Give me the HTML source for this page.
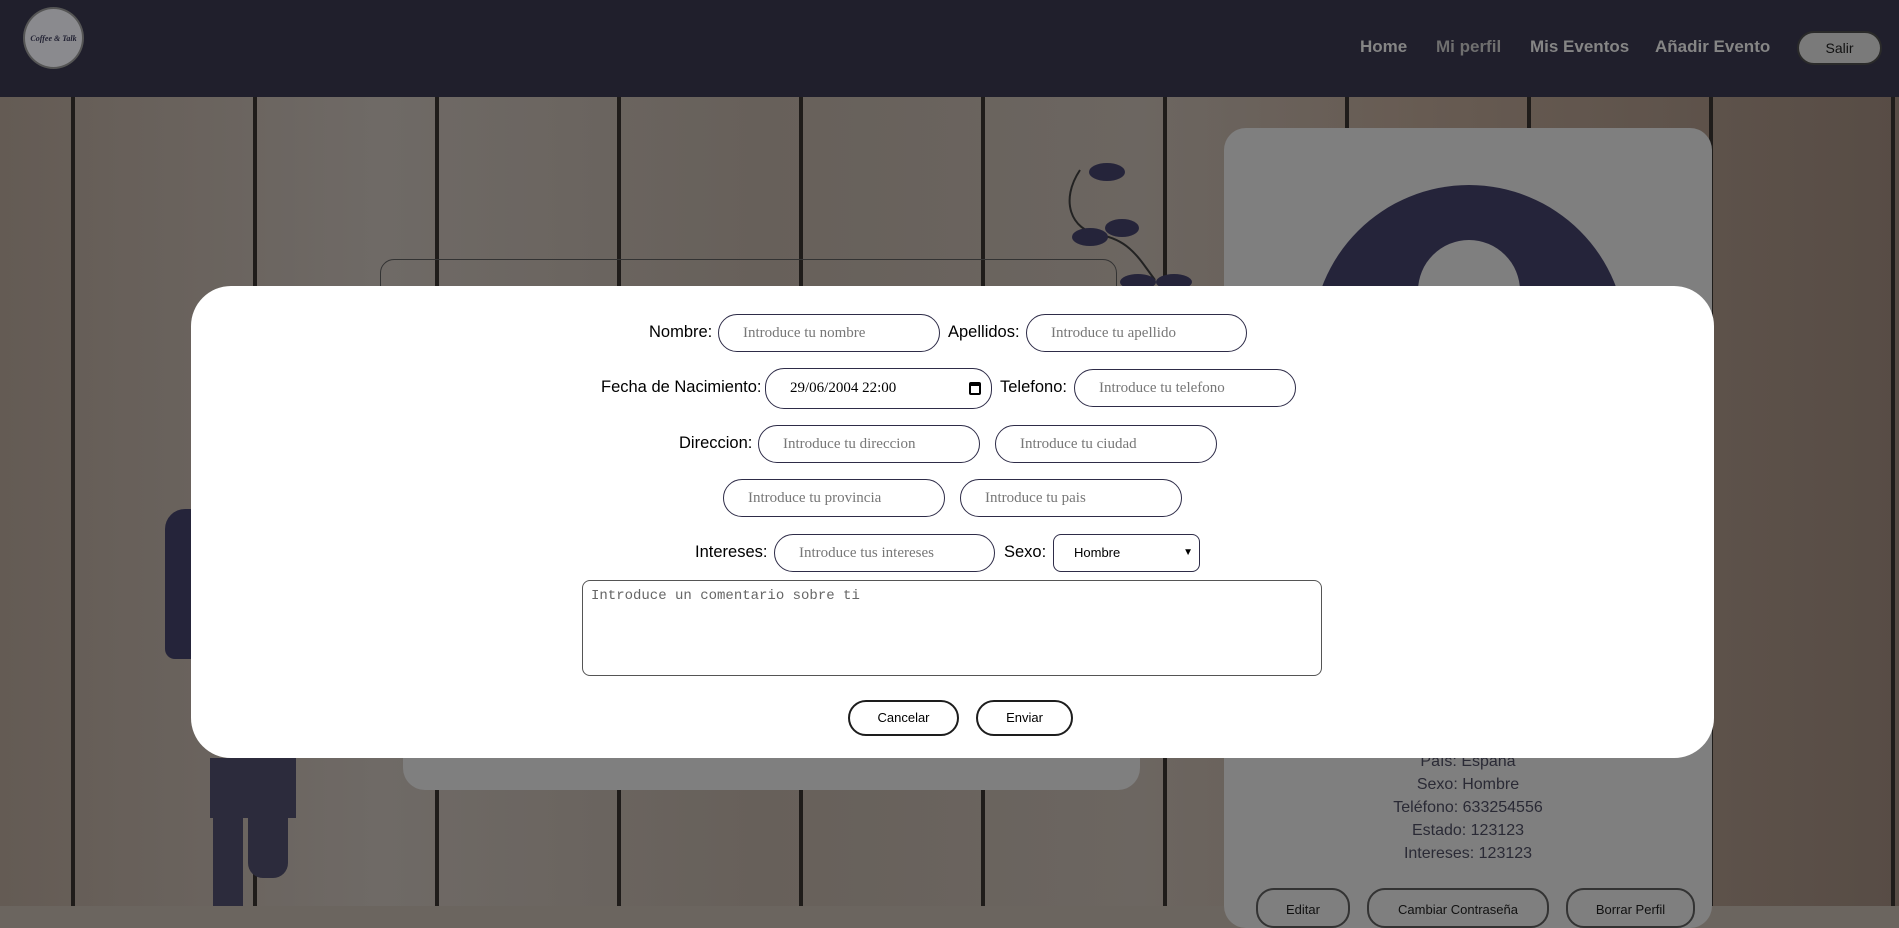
<!DOCTYPE html>
<html><head><meta charset="utf-8"><style>
*{box-sizing:border-box;margin:0;padding:0}
body{width:1899px;height:906px;overflow:hidden;position:relative;font-family:"Liberation Sans",sans-serif;background:#6b655f}
.bg{position:absolute;left:0;top:97px;width:1899px;height:809px;
background:
repeating-linear-gradient(90deg,transparent 0 71px,#1f1c1a 71px 75px,transparent 75px 182px),
linear-gradient(90deg,#645b54,#6f6a66 20%,#67605a 40%,#6c6661 60%,#675b52 75%,#574c45 100%);}
.hdr{position:absolute;left:0;top:0;width:1899px;height:97px;background:#201f2c}
.logo{position:absolute;left:23px;top:7px;width:61px;height:62px;border-radius:50%;background:#8a8a8e;border:2px solid #555;font:italic bold 8px "Liberation Serif",serif;color:#223;display:flex;align-items:center;justify-content:center}
.nav{position:absolute;top:37px;font-weight:bold;font-size:17px;color:#858585}
.salir{position:absolute;left:1797px;top:31px;width:85px;height:34px;border-radius:17px;background:#7a7a7a;border:2px solid #2a2a2a;font-size:14px;color:#111;text-align:center;line-height:30px}
.card{position:absolute;background:#7f7f7f;border-radius:22px}
.modal{position:absolute;left:191px;top:286px;width:1523px;height:472px;background:#fff;border-radius:40px}
.lbl{position:absolute;font-size:16.5px;color:#000}
.in{position:absolute;height:38px;border:1px solid #2e2c48;border-radius:19px;background:#fff;font:15px "Liberation Serif",serif;color:#777;padding-left:24px;line-height:36px}
.info{position:absolute;left:1224px;width:488px;text-align:center;font-size:16px;color:#2a2a35}
.btn{position:absolute;border:2px solid #1d1d1d;border-radius:18px;background:#fff;font-size:13px;text-align:center;color:#000}
.gb{position:absolute;border:2px solid #333;border-radius:18px;font-size:13px;text-align:center;color:#111;height:40px;padding-top:12px}
.dk{position:absolute;background:#25243a}
</style></head><body>
<div class="bg"></div>
<div class="hdr"></div>
<div class="logo">Coffee &amp; Talk</div>
<div class="nav" style="left:1360px">Home</div>
<div class="nav" style="left:1436px;color:#6f6f6f">Mi perfil</div>
<div class="nav" style="left:1530px">Mis Eventos</div>
<div class="nav" style="left:1655px">Añadir Evento</div>
<div class="salir">Salir</div>

<div style="position:absolute;left:380px;top:259px;width:737px;height:60px;border:1px solid #333;border-radius:14px"></div>
<div class="card" style="left:403px;top:700px;width:737px;height:90px"></div>
<svg style="position:absolute;left:1060px;top:160px" width="140" height="130"><path d="M20 10 C0 40,10 70,40 75 C70 80,80 100,95 120" fill="none" stroke="#222" stroke-width="2"/><ellipse cx="47" cy="12" rx="18" ry="9" fill="#25243a"/><ellipse cx="62" cy="68" rx="17" ry="9" fill="#25243a"/><ellipse cx="30" cy="77" rx="18" ry="9" fill="#25243a"/><ellipse cx="78" cy="122" rx="18" ry="8" fill="#25243a"/><ellipse cx="114" cy="122" rx="18" ry="8" fill="#25243a"/></svg>
<div class="dk" style="left:165px;top:509px;width:26px;height:150px;border-radius:20px 0 0 10px"></div>
<div class="dk" style="left:210px;top:758px;width:86px;height:60px;background:#2c2b3c"></div>
<div class="dk" style="left:213px;top:818px;width:30px;height:88px;background:#2c2b3c"></div>
<div class="dk" style="left:248px;top:818px;width:40px;height:60px;border-radius:0 0 15px 15px;background:#2c2b3c"></div>

<div class="card" style="left:1224px;top:128px;width:488px;height:800px"></div>
<div style="position:absolute;left:1312px;top:185px;width:314px;height:314px;border-radius:50%;background:#25243a"></div>
<div style="position:absolute;left:1418px;top:240px;width:102px;height:102px;border-radius:50%;background:#7f7f7f"></div>
<div class="info" style="top:753px">País: España</div>
<div class="info" style="top:776px">Sexo: Hombre</div>
<div class="info" style="top:799px">Teléfono: 633254556</div>
<div class="info" style="top:822px">Estado: 123123</div>
<div class="info" style="top:845px">Intereses: 123123</div>
<div class="gb" style="left:1256px;top:888px;width:94px">Editar</div>
<div class="gb" style="left:1367px;top:888px;width:182px">Cambiar Contraseña</div>
<div class="gb" style="left:1566px;top:888px;width:129px">Borrar Perfil</div>

<div class="modal"></div>
<div class="lbl" style="left:649px;top:323px">Nombre:</div>
<div class="in" style="left:718px;top:314px;width:222px">Introduce tu nombre</div>
<div class="lbl" style="left:948px;top:323px">Apellidos:</div>
<div class="in" style="left:1026px;top:314px;width:221px">Introduce tu apellido</div>

<div class="lbl" style="left:601px;top:378px">Fecha de Nacimiento:</div>
<div class="in" style="left:765px;top:368px;width:227px;height:41px;color:#000;line-height:39px">29/06/2004 22:00<span style="position:absolute;right:10px;top:13px;width:12px;height:13px;border:2px solid #000;border-top-width:4px;border-radius:2px"></span></div>
<div class="lbl" style="left:1000px;top:378px">Telefono:</div>
<div class="in" style="left:1074px;top:369px;width:222px">Introduce tu telefono</div>

<div class="lbl" style="left:679px;top:434px">Direccion:</div>
<div class="in" style="left:758px;top:425px;width:222px">Introduce tu direccion</div>
<div class="in" style="left:995px;top:425px;width:222px">Introduce tu ciudad</div>

<div class="in" style="left:723px;top:479px;width:222px">Introduce tu provincia</div>
<div class="in" style="left:960px;top:479px;width:222px">Introduce tu pais</div>

<div class="lbl" style="left:695px;top:543px">Intereses:</div>
<div class="in" style="left:774px;top:534px;width:221px">Introduce tus intereses</div>
<div class="lbl" style="left:1004px;top:543px">Sexo:</div>
<div class="in" style="left:1053px;top:534px;width:147px;border-radius:8px;font:13px 'Liberation Sans',sans-serif;color:#000;padding-left:20px;line-height:36px">Hombre<span style="position:absolute;right:6px;top:0;font-size:10px;line-height:36px">&#9660;</span></div>

<div style="position:absolute;left:582px;top:580px;width:740px;height:96px;border:1px solid #555;border-radius:8px;font:14px 'Liberation Mono',monospace;color:#666;padding:7px 8px">Introduce un comentario sobre ti</div>

<div class="btn" style="left:848px;top:700px;width:111px;height:36px;line-height:32px">Cancelar</div>
<div class="btn" style="left:976px;top:700px;width:97px;height:36px;line-height:32px">Enviar</div>
</body></html>
